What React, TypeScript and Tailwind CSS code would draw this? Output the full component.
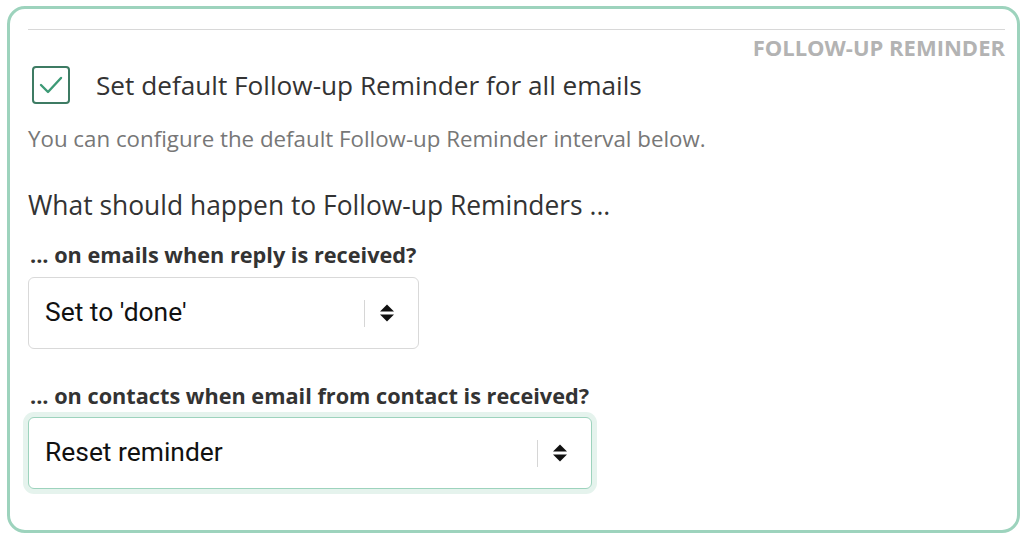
const OPEN = { fontFamily: '"Open Sans", "Noto Sans", sans-serif' };
const ROBOTO = { fontFamily: 'Roboto, "Liberation Sans", sans-serif' };

function Arrows() {
  return (
    <svg width="16" height="18" viewBox="0 0 16 18" className="text-[#111]">
      <path d="M8 0.5 L15 7.5 H1 Z" fill="currentColor" />
      <path d="M1 10.5 H15 L8 17.5 Z" fill="currentColor" />
    </svg>
  );
}

function Select({ value, width, focused }: { value: string; width: string; focused?: boolean }) {
  return (
    <div
      className={`${width} h-[72px] bg-white rounded-[6px] flex items-center pl-[16px] pr-[23px] ${
        focused
          ? "border border-[#9dd3bd] ring-[5px] ring-[#e5f3ed]"
          : "border border-[#d9d9d9]"
      }`}
    >
      <span className="flex-1 text-[26.4px] text-[#111]" style={ROBOTO}>
        {value}
      </span>
      <span className="w-px h-[27px] bg-[#d6d6d6] mr-[14px]" />
      <Arrows />
    </div>
  );
}

export default function App() {
  return (
    <div className="w-[1024px] h-[541px] bg-white pt-[6px] pl-[7px]" style={OPEN}>
      <div className="w-[1013px] h-[527px] border-[3px] border-[#9dd3bd] rounded-[18px] pt-[20px] pl-[18px] pr-[12px]">
        <div className="h-px bg-[#d8d8d8]" />
        <div className="text-right text-[22px] font-bold text-[#b3b3b3] leading-[24px] mt-[5px]">
          FOLLOW-UP REMINDER
        </div>

        <div className="flex items-center mt-[7px] ml-[4px] h-[38px]">
          <div className="w-[38px] h-[38px] border-2 border-[#3d7b63] rounded-[4px] flex items-center justify-center">
            <svg width="24" height="18" viewBox="0 0 24 18" fill="none">
              <path d="M2 9 L9 16 L22 2" stroke="#3d9a76" strokeWidth="2.4" strokeLinecap="round" strokeLinejoin="round" />
            </svg>
          </div>
          <span className="ml-[26px] text-[26.2px] text-[#333] leading-[34px]">
            Set default Follow-up Reminder for all emails
          </span>
        </div>

        <p className="mt-[20px] text-[22.3px] text-[#777] leading-[30px]">
          You can configure the default Follow-up Reminder interval below.
        </p>

        <p className="mt-[34px] text-[26.4px] text-[#333] leading-[34px]">
          What should happen to Follow-up Reminders ...
        </p>

        <p className="mt-[19px] ml-[2px] text-[21.7px] font-bold text-[#333] leading-[28px]">
          ... on emails when reply is received?
        </p>
        <div className="mt-[8px]">
          <Select value="Set to 'done'" width="w-[391px]" />
        </div>

        <p className="mt-[33px] ml-[2px] text-[21.7px] font-bold text-[#333] leading-[28px]">
          ... on contacts when email from contact is received?
        </p>
        <div className="mt-[7px]">
          <Select value="Reset reminder" width="w-[564px]" focused />
        </div>
      </div>
    </div>
  );
}
